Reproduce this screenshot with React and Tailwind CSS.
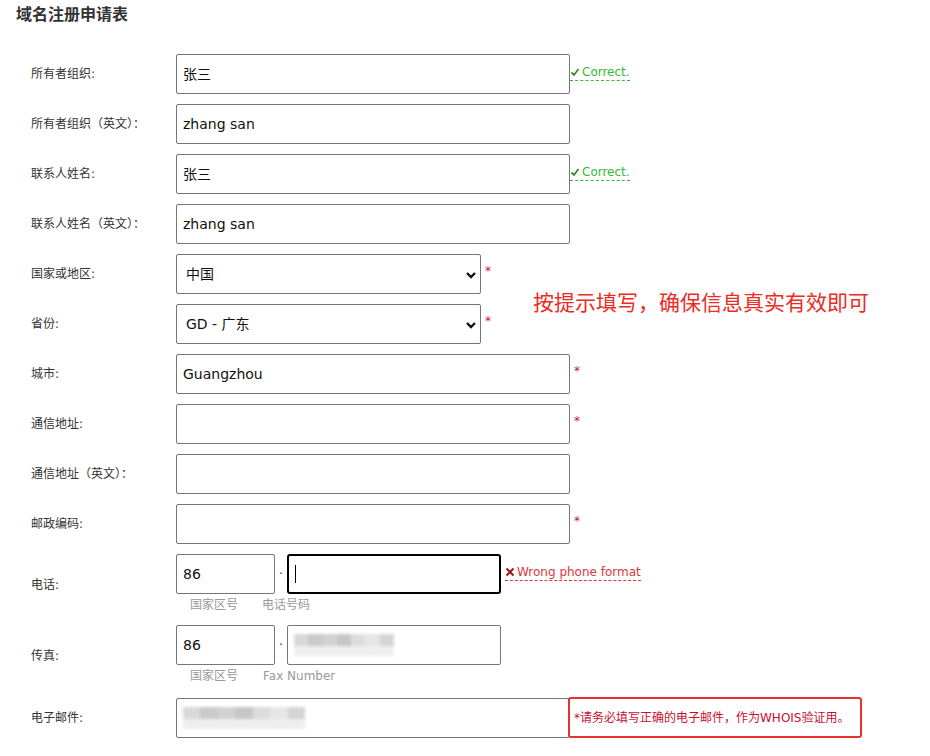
import React from 'react'

const font = { fontFamily: '"DejaVu Sans", "Noto Sans CJK SC", sans-serif' }

const Star = () => <span className="self-start mt-[8px] ml-[4px] text-[12px] text-[#c8102e]">*</span>

const Correct = () => (
  <span className="flex items-center self-start mt-[10px] border-b border-dashed border-[#33bb33] leading-[16px]">
    <svg width="10" height="10" viewBox="0 0 10 10" className="mr-[2px]">
      <path d="M1.5 5.5 L4 8 L8.5 2" fill="none" stroke="#3a8a2a" strokeWidth="1.8" />
    </svg>
    <span className="text-[12px] text-[#33bb33]">Correct.</span>
  </span>
)

const Input = ({ value, className = 'w-[394px]', children }) => (
  <div className={`h-[40px] border border-[#767676] rounded-[2px] bg-white flex items-center px-[6px] text-[14px] text-[#111] ${className}`}>
    {value}
    {children}
  </div>
)

const Select = ({ value }) => (
  <div className="relative h-[40px] w-[305px] border border-[#767676] rounded-[2px] bg-white flex items-center pl-[9px] text-[14px] text-[#111]">
    {value}
    <svg width="12" height="10" viewBox="0 0 12 10" className="absolute right-[3px] top-[15px]">
      <path d="M2 3 L6 7 L10 3" fill="none" stroke="#111" strokeWidth="2.4" />
    </svg>
  </div>
)

const Blur = ({ w }) => (
  <div className="flex flex-col blur-[1.5px]" style={{ width: w }}>
    <div className="flex h-[12px]">
      <div className="flex-1 bg-[#d8d8d8]" />
      <div className="flex-1 bg-[#cacaca]" />
      <div className="flex-1 bg-[#d2d2d2]" />
      <div className="flex-1 bg-[#c6c6c6]" />
      <div className="flex-1 bg-[#dcdcdc]" />
      <div className="flex-1 bg-[#e6e6e6]" />
      <div className="flex-1 bg-[#d4d4d4]" />
    </div>
    <div className="h-[10px] bg-[#eeeeee]" />
  </div>
)

const Row = ({ label, children }) => (
  <div className="flex items-center h-[40px] mb-[10px]">
    <div className="w-[176px] pl-[31px] text-[12px] text-[#333]">{label}</div>
    {children}
  </div>
)

export default function App() {
  return (
    <div className="relative w-[930px] h-[756px] bg-white overflow-hidden" style={font}>
      <h1 className="pl-[16px] pt-[5px] text-[16px] leading-[20px] font-bold text-[#333]">域名注册申请表</h1>

      <div className="mt-[29px]">
        <Row label="所有者组织:">
          <Input value="张三" />
          <Correct />
        </Row>
        <Row label="所有者组织（英文）：">
          <Input value="zhang san" />
        </Row>
        <Row label="联系人姓名:">
          <Input value="张三" />
          <Correct />
        </Row>
        <Row label="联系人姓名（英文）：">
          <Input value="zhang san" />
        </Row>
        <Row label="国家或地区:">
          <Select value="中国" />
          <Star />
        </Row>
        <Row label="省份:">
          <Select value="GD - 广东" />
          <Star />
        </Row>
        <Row label="城市:">
          <Input value="Guangzhou" />
          <Star />
        </Row>
        <Row label="通信地址:">
          <Input />
          <Star />
        </Row>
        <Row label="通信地址（英文）：">
          <Input />
        </Row>
        <Row label="邮政编码:">
          <Input />
          <Star />
        </Row>

        {/* phone */}
        <div className="flex items-center mb-[10px]">
          <div className="w-[176px] pl-[31px] text-[12px] text-[#333]">电话:</div>
          <div className="flex flex-col">
            <div className="flex items-center h-[40px]">
              <Input value="86" className="w-[99px]" />
              <span className="w-[12px] text-center text-[12px] text-[#333]">·</span>
              <div className="h-[40px] w-[214px] border-2 border-black rounded-[3px] flex items-center pl-[6px]">
                <div className="w-px h-[18px] bg-black" />
              </div>
              <span className="flex items-center self-start mt-[10px] ml-[4px] border-b border-dashed border-[#d9363e] leading-[16px]">
                <svg width="10" height="10" viewBox="0 0 10 10" className="mr-[2px]">
                  <path d="M1.5 1.5 L8.5 8.5 M8.5 1.5 L1.5 8.5" stroke="#a31818" strokeWidth="2" />
                </svg>
                <span className="text-[12px] text-[#d9363e]">Wrong phone format</span>
              </span>
            </div>
            <div className="flex h-[21px] items-center text-[12px] text-[#999]">
              <span className="ml-[14px] w-[72px]">国家区号</span>
              <span>电话号码</span>
            </div>
          </div>
        </div>

        {/* fax */}
        <div className="flex items-center mb-[11px]">
          <div className="w-[176px] pl-[31px] text-[12px] text-[#333]">传真:</div>
          <div className="flex flex-col">
            <div className="flex items-center h-[40px]">
              <Input value="86" className="w-[99px]" />
              <span className="w-[12px] text-center text-[12px] text-[#333]">·</span>
              <Input className="w-[214px]">
                <Blur w={100} />
              </Input>
            </div>
            <div className="flex h-[21px] items-center text-[12px] text-[#999]">
              <span className="ml-[14px] w-[73px]">国家区号</span>
              <span>Fax Number</span>
            </div>
          </div>
        </div>

        {/* email */}
        <div className="flex items-center h-[41px]">
          <div className="w-[176px] pl-[31px] text-[12px] text-[#333]">电子邮件:</div>
          <Input className="w-[394px]">
            <Blur w={122} />
          </Input>
          <div className="-ml-[2px] h-[41px] w-[294px] border-2 border-[#e8302c] rounded-[3px] flex items-center pl-[4px] text-[12px] text-[#c8102e]">
            *请务必填写正确的电子邮件，作为WHOIS验证用。
          </div>
        </div>
      </div>

      {/* annotation */}
      <div className="absolute left-[533px] top-[289px] text-[21px] leading-[28px] text-[#ee2a24]">
        按提示填写，确保信息真实有效即可
      </div>
    </div>
  )
}
